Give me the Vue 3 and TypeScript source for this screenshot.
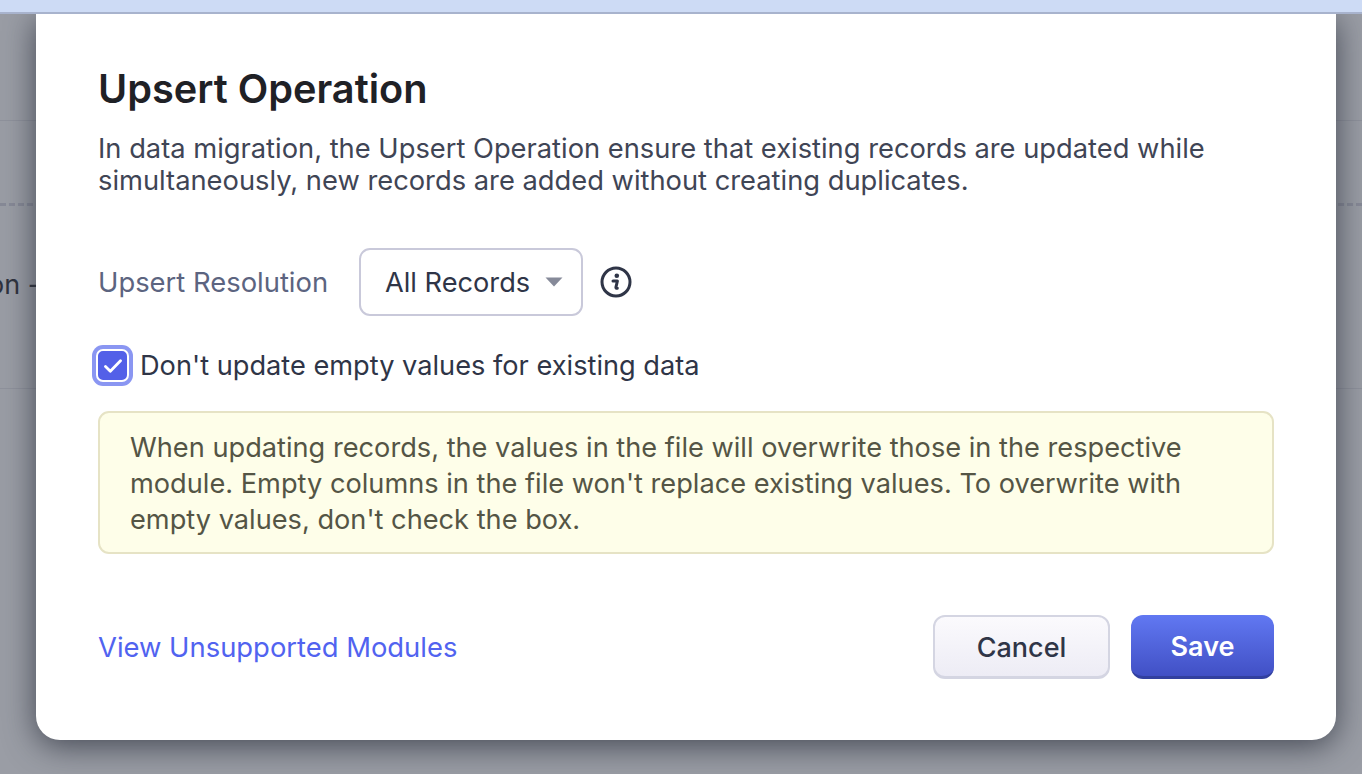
<template>
  <div class="page">
    <div class="top-band"></div>
    <div class="backdrop">
      <div class="bg-row bg-first"></div>
      <div class="bg-dash"></div>
      <div class="bg-row bg-text">on -</div>

      <section class="modal">
        <h1 class="title">Upsert Operation</h1>
        <p class="desc">
          In data migration, the Upsert Operation ensure that existing records are updated while<br />
          simultaneously, new records are added without creating duplicates.
        </p>

        <div class="resolution">
          <span class="res-label">Upsert Resolution</span>
          <div class="select">
            <span>{{ resolution }}</span>
            <svg class="caret" width="18" height="10" viewBox="0 0 18 10">
              <path d="M0.5 0.5h17l-8.5 9z" fill="#868a99" />
            </svg>
          </div>
          <svg class="info" width="32" height="32" viewBox="0 0 32 32" fill="none">
            <circle cx="16" cy="16" r="14" stroke="#2f3547" stroke-width="3" />
            <circle cx="16.8" cy="9.8" r="2.3" fill="#2f3547" />
            <path d="M13 15h4.4l-1.5 6.4q-.2 1 1.4.8" stroke="#2f3547" stroke-width="3" stroke-linecap="round" stroke-linejoin="round" />
          </svg>
        </div>

        <label class="check-row">
          <span class="check">
            <svg width="18" height="14" viewBox="0 0 18 14" fill="none">
              <path d="M1.5 7.5l4.8 4.7L16.5 1.8" stroke="#fff" stroke-width="2.8" stroke-linecap="round" stroke-linejoin="round" />
            </svg>
          </span>
          <span>Don't update empty values for existing data</span>
        </label>

        <div class="note">
          When updating records, the values in the file will overwrite those in the respective<br />
          module. Empty columns in the file won't replace existing values. To overwrite with<br />
          empty values, don't check the box.
        </div>

        <div class="footer">
          <a class="link">View Unsupported Modules</a>
          <div class="actions">
            <button class="btn cancel" type="button">Cancel</button>
            <button class="btn save" type="button">Save</button>
          </div>
        </div>
      </section>
    </div>
  </div>
</template>

<script setup lang="ts">
import { ref } from 'vue'

const resolution = ref('All Records')
</script>

<style>
html,
body {
  margin: 0;
  overflow: hidden;
}
</style>

<style scoped>
.page {
  display: flex;
  flex-direction: column;
  width: 1362px;
  height: 774px;
  overflow: hidden;
  font-family: Inter, "Noto Sans", sans-serif;
  background: #9a9da5;
}

.top-band {
  flex-shrink: 0;
  height: 12px;
  background: #cddbf5;
  border-bottom: 2px solid #a8b3cd;
}

.backdrop {
  position: relative;
  flex: 1;
  overflow: hidden;
  background: #9a9da5;
}

.bg-row {
  border-bottom: 1px solid #8f929c;
}

.bg-first {
  height: 106px;
}

.bg-dash {
  height: 0;
  margin-top: 82px;
  border-top: 3px dashed #878a97;
}

.bg-text {
  height: 183px;
  padding-top: 63px;
  box-sizing: border-box;
  font-size: 27px;
  line-height: 32px;
  color: #2e323d;
  margin-left: -12px;
}

/* sits over the page, its top is cut off by the band */
.modal {
  position: absolute;
  left: 36px;
  top: 0;
  width: 1300px;
  height: 726px;
  box-sizing: border-box;
  padding: 52px 62px 0;
  background: #fff;
  border-radius: 0 0 24px 24px;
  box-shadow: 0 6px 32px rgba(45, 50, 62, 0.8);
  color: #2f3547;
}

.title {
  margin: 0;
  font-size: 39.7px;
  line-height: 46px;
  font-weight: 600;
  color: #1f2126;
}

.desc {
  margin: 21px 0 0;
  font-size: 27.3px;
  line-height: 32px;
  color: #3f4555;
}

.resolution {
  display: flex;
  align-items: center;
  margin-top: 51px;
}

.res-label {
  width: 261px;
  font-size: 27.4px;
  color: #5c6480;
}

.select {
  display: flex;
  align-items: center;
  justify-content: space-between;
  box-sizing: border-box;
  width: 224px;
  height: 68px;
  padding: 0 18px 0 24px;
  border: 2px solid #c9c9da;
  border-radius: 11px;
  font-size: 27.2px;
}

.info {
  margin-left: 17px;
}

.check-row {
  display: flex;
  align-items: center;
  gap: 7px;
  margin: 29px 0 0 -6px;
  font-size: 27.2px;
}

.check {
  display: flex;
  align-items: center;
  justify-content: center;
  box-sizing: border-box;
  width: 33px;
  height: 33px;
  margin: 4px;
  background: #5360e8;
  border: 2px solid #fff;
  border-radius: 7px;
  box-shadow: 0 0 0 4px #8a96f2;
}

.note {
  margin-top: 25px;
  padding: 17px 30px;
  height: 143px;
  box-sizing: border-box;
  background: #fefee9;
  border: 2px solid #e6e3c5;
  border-radius: 11px;
  font-size: 27.2px;
  line-height: 36px;
  color: #545545;
}

.footer {
  display: flex;
  align-items: center;
  justify-content: space-between;
  margin-top: 61px;
}

.link {
  font-size: 27.4px;
  color: #5163f0;
}

.actions {
  display: flex;
  gap: 21px;
}

.btn {
  height: 64px;
  box-sizing: border-box;
  padding-top: 2px;
  border-radius: 12px;
  font-family: inherit;
  font-size: 27px;
  font-weight: 500;
}

.cancel {
  width: 177px;
  border: 2px solid #d4d5e2;
  border-bottom-width: 3px;
  background: linear-gradient(#fbfafd, #edecf5);
  color: #2f3547;
}

.save {
  width: 143px;
  border: 0;
  border-bottom: 3px solid #32409f;
  background: linear-gradient(#6178f2, #4150c5);
  color: #fff;
  font-weight: 600;
}
</style>
